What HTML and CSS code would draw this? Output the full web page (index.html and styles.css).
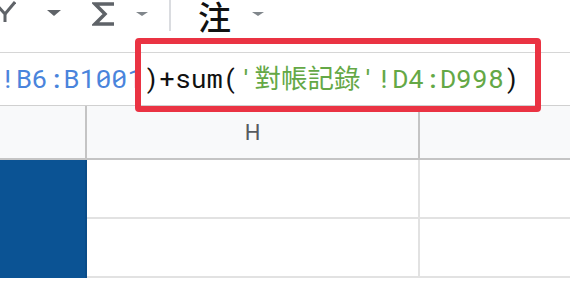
FILE: index.html
```html
<!DOCTYPE html>
<html lang="zh-Hant">
<head>
    <meta charset="UTF-8">
    <meta name="viewport" content="width=device-width, initial-scale=1.0">
    <title>Sheet</title>
    <link rel="stylesheet" href="styles.css">
</head>
<body>
    <div class="toolbar">
        <svg class="icon-filter" width="16" height="24" viewBox="0 0 16 24">
            <polyline points="-6,2 5,14 5,22" fill="none" stroke="#5f6368" stroke-width="3"/>
            <polyline points="15,2 5,14" fill="none" stroke="#5f6368" stroke-width="3"/>
        </svg>
        <span class="caret caret-big"></span>
        <svg class="icon-sigma" width="24" height="26" viewBox="0 0 24 26">
            <polyline points="22,3 3,3 13,13 3,23 22,23" fill="none" stroke="#5f6368" stroke-width="3.5" stroke-linejoin="miter"/>
        </svg>
        <span class="caret caret-small"></span>
        <span class="divider"></span>
        <span class="cjk-btn">注</span>
        <span class="caret caret-small"></span>
    </div>

    <div class="formula-bar">
        <span class="ref">!B6:B1001</span><span class="plain">)+sum(</span><span class="str">'對帳記錄'!D4:D998</span><span class="plain">)</span>
    </div>
    <div class="highlight"></div>

    <div class="grid">
        <div class="row header">
            <div class="cell first"></div>
            <div class="cell mid">H</div>
            <div class="cell last"></div>
        </div>
        <div class="row">
            <div class="cell first filled"></div>
            <div class="cell mid"></div>
            <div class="cell last"></div>
        </div>
        <div class="row">
            <div class="cell first filled"></div>
            <div class="cell mid"></div>
            <div class="cell last"></div>
        </div>
    </div>
</body>
</html>
```

FILE: styles.css
```css
body {
    margin: 0;
    width: 570px;
    height: 282px;
    overflow: hidden;
    background-color: white;
    font-family: Roboto, "Noto Sans CJK TC", sans-serif;
    position: relative;
}
.toolbar {
    height: 52px;
    display: flex;
    align-items: flex-start;
}
.caret {
    width: 0;
    height: 0;
    border-left-style: solid;
    border-right-style: solid;
    border-top-style: solid;
    border-left-color: transparent;
    border-right-color: transparent;
}
.caret-big {
    margin: 10px 0 0 31px;
    border-width: 6px 7px 0 7px;
    border-top-color: #5f6368;
}
.icon-sigma {
    margin: 1px 0 0 31px;
}
.caret-small {
    margin: 12px 0 0 20px;
    border-width: 4px 6px 0 6px;
    border-top-color: #80868b;
}
.caret + .divider {
    margin-left: 21px;
}
.divider {
    width: 2px;
    height: 31px;
    background-color: #dadce0;
}
.cjk-btn {
    margin: 0 0 0 27px;
    font-family: "Noto Sans CJK TC", sans-serif;
    font-size: 33px;
    font-weight: 500;
    line-height: 32px;
    color: #111;
}
.cjk-btn + .caret-small {
    margin-left: 21px;
}
.formula-bar {
    height: 53px;
    border-top: 1px solid #d6d6d6;
    box-sizing: border-box;
    padding-top: 7px;
    font-family: "Roboto Mono", "DejaVu Sans Mono", "Noto Sans CJK TC", monospace;
    font-size: 26.5px;
    line-height: 36px;
    white-space: nowrap;
}
.ref {
    color: #4a84dc;
}
.plain {
    color: #111;
}
.str {
    color: #64a846;
}
.highlight {
    position: absolute;
    left: 135px;
    top: 38px;
    width: 406px;
    height: 74px;
    box-sizing: border-box;
    border: 6px solid #ea3343;
    border-radius: 4px;
}
.grid {
    display: flex;
    flex-direction: column;
}
.row {
    display: flex;
    height: 59px;
    box-sizing: border-box;
    border-bottom: 2px solid #e2e2e2;
}
.row.header {
    height: 55px;
    background-color: #f8f9fa;
    border-top: 1px solid #d0d0d0;
    border-bottom: 2px solid #c4c4c4;
}
.cell {
    box-sizing: border-box;
}
.first {
    width: 87px;
    border-right: 2px solid #c4c4c4;
}
.mid {
    width: 333px;
    border-right: 2px solid #e2e2e2;
}
.header .mid {
    border-right-color: #c4c4c4;
    display: flex;
    justify-content: center;
    align-items: center;
    font-size: 22px;
    color: #575b60;
}
.last {
    flex: 1;
}
.filled {
    background-color: #0b5394;
    border-right-color: #0a4c88;
    margin-bottom: -2px;
}
```
